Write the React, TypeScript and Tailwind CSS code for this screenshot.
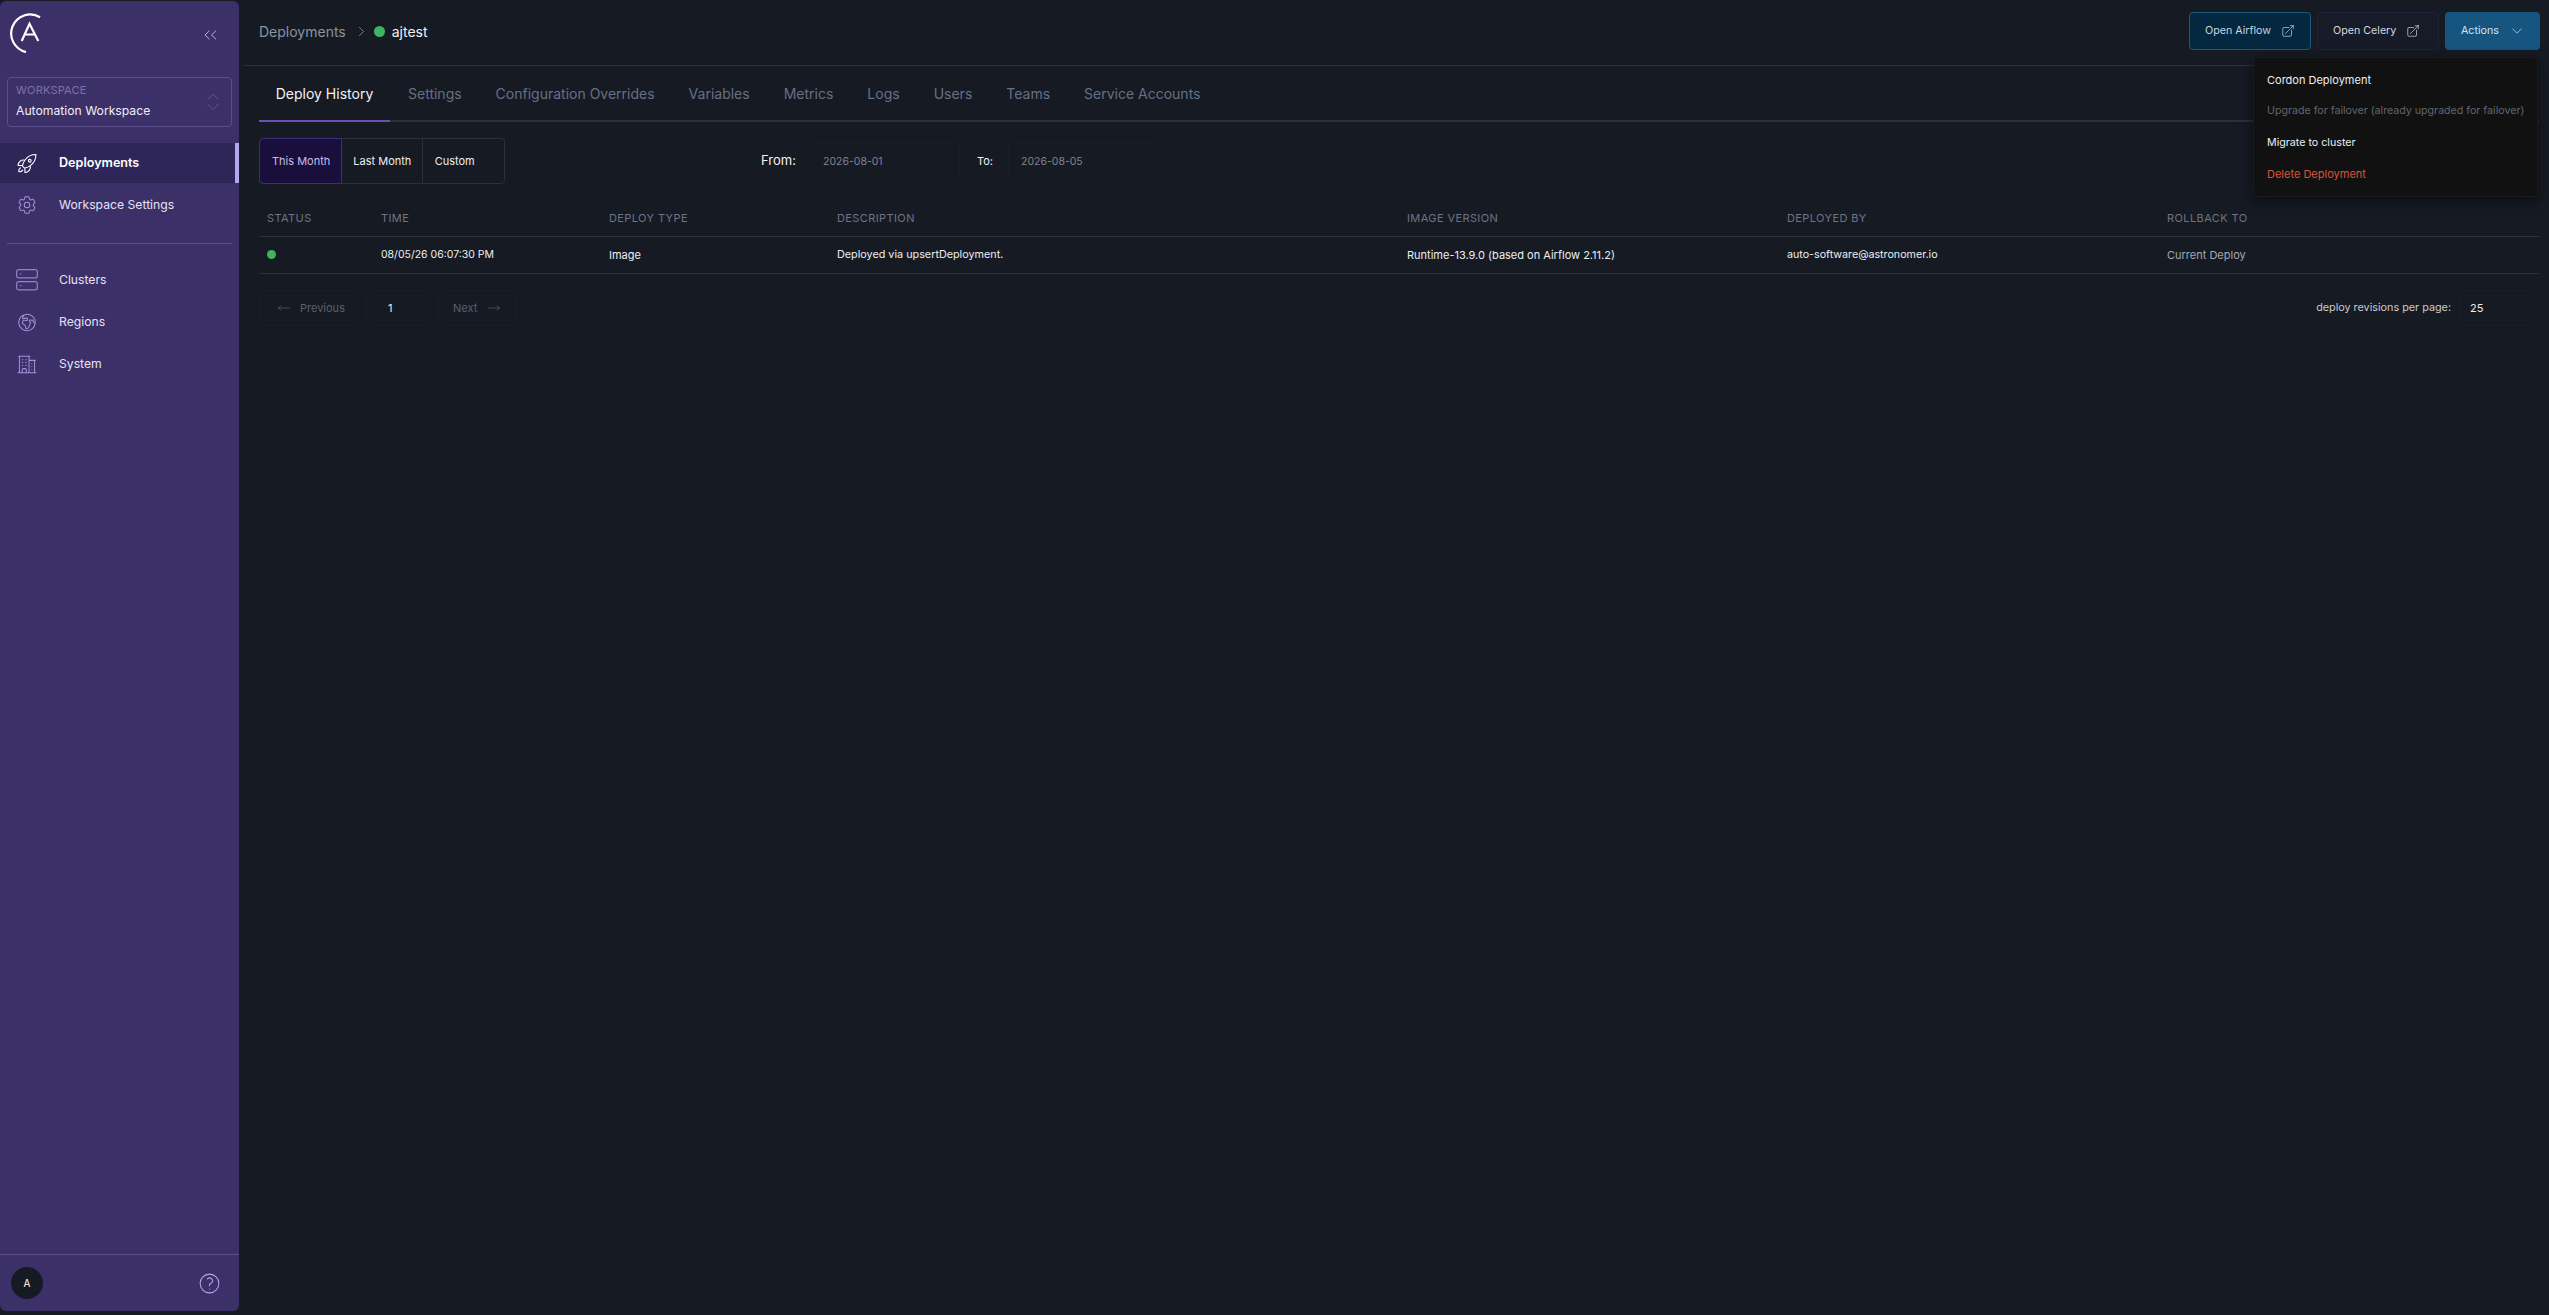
import React from "react";
import {
  HiOutlineRocketLaunch,
  HiOutlineCog6Tooth,
  HiOutlineGlobeEuropeAfrica,
  HiOutlineBuildingOffice2,
  HiOutlineArrowTopRightOnSquare,
  HiOutlineChevronDown,
  HiOutlineChevronRight,
  HiOutlineQuestionMarkCircle,
  HiOutlineArrowLongLeft,
  HiOutlineArrowLongRight,
} from "react-icons/hi2";

function Logo() {
  return (
    <svg width="32" height="40" viewBox="0 0 32 40" fill="none" stroke="white" strokeWidth="2.2">
      <path d="M31 4.2 A 19 19 0 1 0 17 39" />
      <path d="M12.7 28 L20.5 10.8 L29.3 28 M15.5 21.5 L26 21.5" strokeWidth="2.2" />
    </svg>
  );
}

function ClusterIcon() {
  return (
    <svg width="22" height="22" viewBox="0 0 22 22" fill="none" stroke="#8f82c7" strokeWidth="1.2">
      <rect x="0.7" y="0.7" width="20.6" height="8.2" rx="2" />
      <rect x="0.7" y="12.6" width="20.6" height="8.2" rx="2" />
      <path d="M4 4.8h1.4M4 16.7h1.4" />
    </svg>
  );
}

function NavItem({ icon, label, active }: { icon: React.ReactNode; label: string; active?: boolean }) {
  return (
    <div
      className={
        "relative h-10 flex items-center pl-[16px] " +
        (active ? "bg-[#2e2558] text-white font-semibold" : "text-[#e6e2f5]")
      }
    >
      <div className="w-[22px] h-[22px] flex items-center justify-center mr-[21px] shrink-0">{icon}</div>
      <span className={active ? "text-[12.6px]" : "text-[12.2px]"}>{label}</span>
      {active && <div className="absolute right-0 top-0 bottom-0 w-1 bg-[#b3a6ec]" />}
    </div>
  );
}

const tabs = ["Settings", "Configuration Overrides", "Variables", "Metrics", "Logs", "Users", "Teams", "Service Accounts"];
const columns = ["Status", "Time", "Deploy Type", "Description", "Image Version", "Deployed By", "Rollback To"];
const gridCols = "grid grid-cols-[114px_228px_228px_570px_380px_380px_1fr]";

export default function App() {
  return (
    <div
      className="w-full h-screen overflow-hidden flex bg-[#161a23] pt-[1px] pb-[4px] antialiased"
      style={{ fontFamily: "Inter, 'Noto Sans', sans-serif" }}
    >
      <aside className="w-[239px] shrink-0 bg-[#3c3069] rounded-[6px] flex flex-col">
        <div className="h-[76px] pl-[9px] pr-[22px] pt-[12px] flex items-start justify-between">
          <Logo />
          <svg width="13" height="10" viewBox="0 0 13 10" fill="none" stroke="#b7abe8" strokeWidth="1" className="mt-[17px]">
            <path d="M5.5 0.7 1 5l4.5 4.3M12 0.7 7.5 5l4.5 4.3" />
          </svg>
        </div>
        <div className="mx-[7px] h-[50px] border border-[#5a4e8c] rounded-[4px] pl-[8px] pr-[11px] flex items-center justify-between">
          <div className="flex flex-col">
            <span className="text-[11px] leading-[14px] tracking-[0.2px] text-[#7d72a8]">WORKSPACE</span>
            <span className="text-[12.2px] leading-[20px] text-[#f0eef8] mt-[4px]">Automation Workspace</span>
          </div>
          <svg width="14" height="18" viewBox="0 0 14 18" fill="none" stroke="#62568f" strokeWidth="1">
            <path d="M1.5 6.5 7 1.2l5.5 5.3M1.5 11 7 16.5l5.5-5.5" />
          </svg>
        </div>
        <nav className="mt-[16px] flex flex-col gap-[2px]">
          <NavItem active label="Deployments" icon={<HiOutlineRocketLaunch strokeWidth={1.2} className="w-[23px] h-[23px] text-white" />} />
          <NavItem label="Workspace Settings" icon={<HiOutlineCog6Tooth strokeWidth={1.1} className="w-[22px] h-[22px] text-[#a094d6]" />} />
        </nav>
        <div className="mx-[7px] mt-[18px] border-t border-[#5a4e8c]" />
        <nav className="mt-[16px] flex flex-col gap-[2px]">
          <NavItem label="Clusters" icon={<ClusterIcon />} />
          <NavItem label="Regions" icon={<HiOutlineGlobeEuropeAfrica strokeWidth={1.1} className="w-[23px] h-[23px] text-[#a094d6]" />} />
          <NavItem label="System" icon={<HiOutlineBuildingOffice2 strokeWidth={1.1} className="w-[23px] h-[23px] text-[#a094d6]" />} />
        </nav>
        <div className="mt-auto border-t border-[#5a4e8c] h-[57px] pl-[11px] pr-[17px] flex items-center justify-between">
          <div className="w-8 h-8 rounded-full bg-[#161a23] text-white text-[10px] flex items-center justify-center">A</div>
          <HiOutlineQuestionMarkCircle strokeWidth={1} className="w-[25px] h-[25px] text-[#b3a6ec]" />
        </div>
      </aside>

      <main className="flex-1 min-w-0 relative">
        <header className="ml-[4px] mr-[11px] h-[65px] border-b border-[#2b3040] pl-[16px] flex items-center justify-between">
          <div className="flex items-center text-[14px] mt-[-4px]">
            <span className="text-[#8a92a3]">Deployments</span>
            <HiOutlineChevronRight className="w-[13px] h-[13px] text-[#8a92a3] ml-[9px] mr-[6px]" />
            <span className="w-[11px] h-[11px] rounded-full bg-[#3fb360] mr-[7px]" />
            <span className="text-[#f1f2f4]">ajtest</span>
          </div>
          <div className="flex items-center gap-[6px] mt-[-4px] mr-[-2px]">
            <button className="w-[122px] h-[38px] rounded-[4px] border border-[#1a5a80] bg-[#04283f] text-[#c5d6e2] text-[10.7px] flex items-center pl-[15px] gap-[10px]">
              Open Airflow <HiOutlineArrowTopRightOnSquare strokeWidth={1.2} className="w-[14px] h-[14px]" />
            </button>
            <button className="w-[122px] h-[38px] rounded-[4px] border border-[#1e2233] bg-[#171b28] text-[#d4d7dd] text-[10.7px] flex items-center pl-[15px] gap-[10px]">
              Open Celery <HiOutlineArrowTopRightOnSquare strokeWidth={1.2} className="w-[14px] h-[14px]" />
            </button>
            <button className="w-[95px] h-[38px] rounded-[4px] bg-[#16557f] text-[#d3e2ec] text-[10.7px] flex items-center pl-[16px] gap-[11px]">
              Actions <HiOutlineChevronDown strokeWidth={1.2} className="w-[14px] h-[14px]" />
            </button>
          </div>
        </header>

        <div className="ml-[20px] mr-[10px]">
          <div className="flex h-[56px] border-b-2 border-[#2b3040] text-[14px] text-[#667085]">
            <div className="relative w-[131px] flex items-center justify-center text-[#f1f2f4]">
              Deploy History
              <div className="absolute left-0 right-0 bottom-[-2px] h-[2px] bg-[#6a52b5]" />
            </div>
            <div className="flex items-center gap-[34px] ml-[18px]">
              {tabs.map((t) => (
                <span key={t}>{t}</span>
              ))}
            </div>
          </div>

          <div className="mt-[16px] flex items-center h-[46px]">
            <div className="flex w-[246px] h-[46px] border border-[#2b3040] rounded-[4px] text-[11px] text-[#eceef2]">
              <div className="w-[82px] flex items-center pl-[12px] bg-[#1a0e3d] text-[#c8bde9] outline outline-[#3c2f75] rounded-l-[4px]">This Month</div>
              <div className="w-[82px] flex items-center pl-[12px] border-r border-[#2b3040]">Last Month</div>
              <div className="w-[82px] flex items-center pl-[12px]">Custom</div>
            </div>
            <label className="ml-[256px] text-[13px] text-[#f1f2f4] w-[49px]">From:</label>
            <div className="w-[150px] h-[39px] border border-[#1a1e2b] rounded-[4px] pl-[12px] pt-[1px] flex items-center text-[10.5px] text-[#80848d]">2026-08-01</div>
            <label className="ml-[17px] text-[11px] text-[#f1f2f4] w-[31px]">To:</label>
            <div className="w-[150px] h-[39px] border border-[#1a1e2b] rounded-[4px] pl-[12px] pt-[1px] flex items-center text-[10.5px] text-[#80848d]">2026-08-05</div>
          </div>

          <div className={gridCols + " mt-[17px] h-[36px] items-center border-b border-[#2b3040] pb-[1px] text-[11px] tracking-[0.4px] text-[#6d7484] uppercase"}>
            {columns.map((c) => (
              <div key={c} className="pl-[8px]">{c}</div>
            ))}
          </div>
          <div className={gridCols + " h-[37px] items-center border-b border-[#2b3040] text-[11px] text-[#eceef2]"}>
            <div className="pl-[8px]">
              <div className="w-[9px] h-[9px] rounded-full bg-[#3fb360] mb-[1px]" />
            </div>
            <div className="pl-[8px] text-[10.5px]">08/05/26 06:07:30 PM</div>
            <div className="pl-[8px]">Image</div>
            <div className="pl-[8px] text-[10.8px]">Deployed via upsertDeployment.</div>
            <div className="pl-[8px]">Runtime-13.9.0 (based on Airflow 2.11.2)</div>
            <div className="pl-[8px] text-[10.7px]">auto-software@astronomer.io</div>
            <div className="pl-[8px] text-[#a4a8b2]">Current Deploy</div>
          </div>

          <div className="mt-[16px] flex items-center justify-between">
            <div className="flex items-center gap-[8px] text-[11px]">
              <div className="w-[99px] h-[36px] border border-[#1a1e2b] rounded-[4px] pl-[17px] flex items-center gap-[9px] text-[#5c606b]">
                <HiOutlineArrowLongLeft strokeWidth={1.2} className="w-[14px] h-[14px]" /> Previous
              </div>
              <div className="w-[64px] h-[36px] border border-[#1a1e2b] rounded-[4px] pl-[21px] flex items-center text-[#eceef2]">1</div>
              <div className="w-[79px] h-[36px] border border-[#1a1e2b] rounded-[4px] pl-[14px] flex items-center gap-[10px] text-[#5c606b]">
                Next <HiOutlineArrowLongRight strokeWidth={1.2} className="w-[14px] h-[14px]" />
              </div>
            </div>
            <div className="flex items-center gap-[8px] text-[10.8px] text-[#c9cbd1]">
              <span>deploy revisions per page:</span>
              <div className="w-[80px] h-[36px] border border-[#1a1e2b] rounded-[4px] pl-[10px] flex items-center text-[11px] text-[#eceef2]">25</div>
            </div>
          </div>
        </div>

        <div className="absolute top-[56px] right-[11px] w-[285px] h-[140px] bg-[#111112] rounded-[4px] border border-[#1b1b1d] shadow-[0_4px_14px_rgba(0,0,0,0.5)] pl-[13px] py-[6px] flex flex-col text-[11px]">
          <div className="h-8 flex items-center text-[#eceef2]">Cordon Deployment</div>
          <div className="h-8 flex items-center text-[#63656a] text-[10.65px] whitespace-nowrap">Upgrade for failover (already upgraded for failover)</div>
          <div className="h-8 flex items-center text-[10.7px] text-[#eceef2]">Migrate to cluster</div>
          <div className="h-8 flex items-center text-[#d9553a]">Delete Deployment</div>
        </div>
      </main>
    </div>
  );
}
